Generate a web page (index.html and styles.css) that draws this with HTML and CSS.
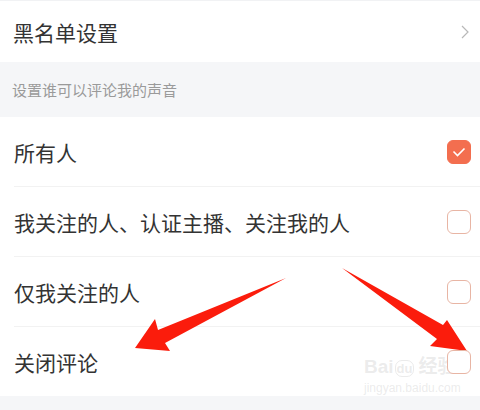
FILE: index.html
```html
<!DOCTYPE html>
<html>
	<head>
		<meta charset="UTF-8">
		<title>评论设置</title>
		<link rel="stylesheet" href="styles.css">
	</head>
	<body>
		<div class="page">
			<div class="topline"></div>
			<div class="row link">
				<span>黑名单设置</span>
				<svg class="chev" width="8" height="14" viewBox="0 0 8 14"><path d="M1 1l6 6-6 6" fill="none" stroke="#b8b8b8" stroke-width="1.2"/></svg>
			</div>
			<div class="section">设置谁可以评论我的声音</div>
			<ul class="list">
				<li class="item"><span>所有人</span><i class="box on"><svg width="14" height="10" viewBox="0 0 14 10"><path d="M1.5 4.5l4 4 7-7" fill="none" stroke="#fff" stroke-width="1.6"/></svg></i></li>
				<li class="item"><span>我关注的人、认证主播、关注我的人</span><i class="box"></i></li>
				<li class="item"><span>仅我关注的人</span><i class="box"></i></li>
				<li class="item"><span>关闭评论</span><i class="box"></i></li>
			</ul>
			<div class="bottom"></div>
			<!-- 水印 -->
			<div class="wm">
				<b>Bai<em>du</em>经验</b>
				<small>jingyan.baidu.com</small>
			</div>
			<!-- 标注箭头 -->
			<svg class="marks" width="480" height="410" viewBox="0 0 480 410">
				<polygon points="135,348 155,319 158,330 286,278 165,343 170,351" fill="#fb1c0c"/>
				<polygon points="342,268 443,325 447,320 467,351 430,346 437,339" fill="#fb1c0c"/>
			</svg>
		</div>
	</body>
</html>
```
FILE: styles.css
```css
body{
	margin: 0;
	background: #fff;
	font-family: "Noto Sans CJK SC", "Noto Sans", sans-serif;
	color: #333;
}
.page{
	position: relative;
	width: 480px;
	height: 410px;
	overflow: hidden;
}
.topline{
	height: 1px;
	background: #f1f2f4;
}
.row{
	display: flex;
	align-items: center;
	justify-content: space-between;
	height: 61px;
	padding: 0 11px 0 13px;
	font-size: 21px;
}
.section{
	height: 55px;
	line-height: 56px;
	background: #f5f6f8;
	padding-left: 12px;
	font-size: 15px;
	color: #9a9a9a;
}
.list{
	list-style: none;
	margin: 0;
	padding: 0;
}
.item{
	display: flex;
	align-items: center;
	justify-content: space-between;
	height: 69px;
	margin-left: 14px;
	padding-right: 9px;
	font-size: 21px;
	border-bottom: 1px solid #f2f2f2;
}
.item:last-child{
	border-bottom: none;
}
.box{
	position: relative;
	z-index: 2;/*盖住箭头尖*/
	display: flex;
	align-items: center;
	justify-content: center;
	box-sizing: border-box;
	width: 24px;
	height: 24px;
	border: 1.5px solid #e8b5a4;
	border-radius: 6px;
	background: #fff;
}
.box.on{
	background: #f36e4f;
	border-color: #f36e4f;
}
.bottom{
	height: 20px;
	background: #f5f6f8;
}
.marks{
	position: absolute;
	left: 0;
	top: 0;
	z-index: 1;
}
.wm{
	position: absolute;
	left: 364px;
	top: 356px;
	z-index: 1;
	display: flex;
	flex-direction: column;
	color: rgba(190,190,190,0.3);
	font-family: "Liberation Sans", "Noto Sans CJK SC", sans-serif;
}
.wm b{
	font-size: 19px;
	line-height: 22px;
	font-weight: bold;
}
.wm em{
	font-style: normal;
	font-size: 13px;
	border: 1.5px solid rgba(190,190,190,0.3);
	border-radius: 7px;
	padding: 0 1px;
	margin: 0 4px 0 1px;
}
.wm small{
	font-size: 12px;
	line-height: 16px;
}
```
